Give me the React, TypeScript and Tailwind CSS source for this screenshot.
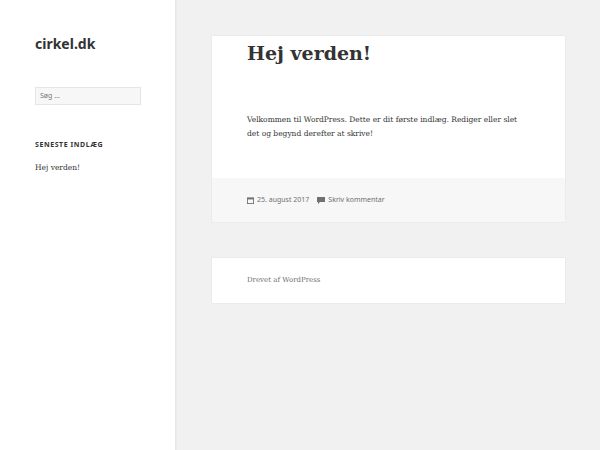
export default function App() {
  const serif = { fontFamily: '"DejaVu Serif", "Liberation Serif", serif' };
  const sans = { fontFamily: '"Noto Sans", "Open Sans", sans-serif' };
  return (
    <div className="flex w-[600px] h-[450px] bg-[#f1f1f1] overflow-hidden">
      <div className="w-[176px] shrink-0 bg-white shadow-[0_0_1px_rgba(0,0,0,0.15)] border-r border-[#e8e8e8] px-[35px] pt-[34px]" style={sans}>
        <div className="text-[14px] font-bold text-[#333] leading-[20px]">cirkel.dk</div>
        <div className="mt-[33px] h-[18px] w-[106px] bg-[#f7f7f7] border border-[#e5e5e5] text-[7px] text-[#777] px-[4px] leading-[16px]">Søg …</div>
        <div className="mt-[35px] text-[7px] font-bold tracking-[0.08em] text-[#333]">SENESTE INDLÆG</div>
        <div className="mt-[11px] text-[7.5px] text-[#333]" style={serif}>Hej verden!</div>
      </div>
      <div className="flex-1 pl-[36px] pr-[35px] pt-[36px] flex flex-col">
        <div className="bg-white shadow-[0_0_1px_rgba(0,0,0,0.15)]">
          <div className="px-[35px] pt-[2px] pb-[37px]">
            <div className="text-[19px] font-bold text-[#333] leading-[30px]" style={serif}>Hej verden!</div>
            <div className="mt-[45px] text-[7.5px] leading-[14px] text-[#333] w-[282px]" style={serif}>
              Velkommen til WordPress. Dette er dit første indlæg. Rediger eller slet det og begynd derefter at skrive!
            </div>
          </div>
          <div className="bg-[#f7f7f7] h-[44px] px-[35px] flex items-center gap-[8px] text-[7px] text-[#707070]" style={sans}>
            <span className="flex items-center gap-[3px]">
              <svg width="7" height="7" viewBox="0 0 8 8"><rect x="0.5" y="1" width="7" height="6.5" fill="none" stroke="#707070" strokeWidth="1"/><rect x="0.5" y="1" width="7" height="1.8" fill="#707070"/></svg>
              25. august 2017
            </span>
            <span className="flex items-center gap-[3px]">
              <svg width="8" height="7" viewBox="0 0 8 7"><path d="M0 0h8v5H3L1 7V5H0z" fill="#707070"/></svg>
              Skriv kommentar
            </span>
          </div>
        </div>
        <div className="mt-[36px] bg-white shadow-[0_0_1px_rgba(0,0,0,0.15)] h-[45px] px-[35px] flex items-center text-[7px] text-[#707070]" style={serif}>
          Drevet af WordPress
        </div>
      </div>
    </div>
  );
}
